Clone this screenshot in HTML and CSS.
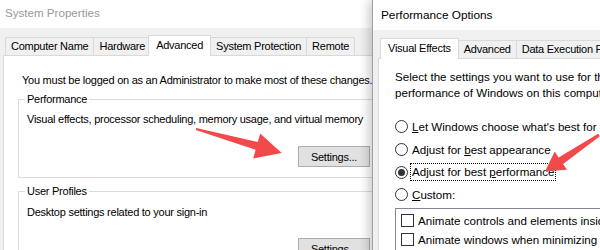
FILE: index.html
```html
<!DOCTYPE html>
<html lang="en">
<head>
    <meta charset="UTF-8">
    <meta name="viewport" content="width=device-width, initial-scale=1.0">
    <title>System Properties</title>
    <link rel="stylesheet" href="styles.css">
</head>
<body>
    <div class="desktop">
        <!-- System Properties (inactive, behind) -->
        <div class="window sysprops">
            <div class="titlebar inactive">System Properties</div>
            <div class="client">
                <div class="tabs">
                    <div class="tab">Computer Name</div>
                    <div class="tab">Hardware</div>
                    <div class="tab active">Advanced</div>
                    <div class="tab">System Protection</div>
                    <div class="tab">Remote</div>
                </div>
                <div class="tab-panel">
                    <p class="note">You must be logged on as an Administrator to make most of these changes.</p>
                    <fieldset class="group">
                        <legend>Performance</legend>
                        <p>Visual effects, processor scheduling, memory usage, and virtual memory</p>
                        <div class="actions"><button class="btn">Settings...</button></div>
                    </fieldset>
                    <fieldset class="group profiles">
                        <legend>User Profiles</legend>
                        <p>Desktop settings related to your sign-in</p>
                        <div class="actions"><button class="btn">Settings...</button></div>
                    </fieldset>
                </div>
            </div>
        </div>

        <!-- Performance Options (active, on top) -->
        <div class="window perfopts">
            <div class="titlebar">Performance Options</div>
            <div class="client">
                <div class="tabs">
                    <div class="tab active">Visual Effects</div>
                    <div class="tab">Advanced</div>
                    <div class="tab">Data Execution Prevention</div>
                </div>
                <div class="tab-panel">
                    <p class="intro">Select the settings you want to use for the appearance and performance of Windows on this computer.</p>
                    <div class="radios">
                        <div class="radio-row"><span class="radio"></span><span><u>L</u>et Windows choose what's best for my computer</span></div>
                        <div class="radio-row"><span class="radio"></span><span>Adjust for <u>b</u>est appearance</span></div>
                        <div class="radio-row"><span class="radio checked"></span><span class="focused">Adjust for best <u>p</u>erformance</span></div>
                        <div class="radio-row"><span class="radio"></span><span><u>C</u>ustom:</span></div>
                    </div>
                    <div class="effects-list">
                        <div class="check-row"><span class="checkbox"></span>Animate controls and elements inside windows</div>
                        <div class="check-row"><span class="checkbox"></span>Animate windows when minimizing and maximizing</div>
                        <div class="check-row"><span class="checkbox"></span>Animations in the taskbar</div>
                    </div>
                </div>
            </div>
        </div>

        <!-- red callout arrows drawn over both windows -->
        <svg class="callouts" width="600" height="250" viewBox="0 0 600 250">
            <polygon fill="#f24a4a" transform="translate(196,129) rotate(15.6)"
                     points="0,-1 63,-4 63,-13 89,0 63,13 63,4 0,1"/>
            <polygon fill="#f24a4a" transform="translate(599,135) rotate(146)"
                     points="0,-1.5 46,-4 46,-11 65,0 46,11 46,4 0,1.5"/>
        </svg>
    </div>
</body>
</html>
```
FILE: styles.css
```css
* {
    margin: 0;
    padding: 0;
    box-sizing: border-box;
}

body {
    background: #fff;
    font-family: "Liberation Sans", Arial, sans-serif;
    color: #000;
    overflow: hidden;
}

.desktop {
    position: relative;
    width: 600px;
    height: 250px;
    overflow: hidden;
}

/* ---------- shared window chrome ---------- */

.window {
    background: #f0f0f0;
}

.titlebar {
    background: #fff;
    white-space: nowrap;
}

.titlebar.inactive {
    color: #999;
}

.tabs {
    display: flex;
    align-items: flex-end;
    white-space: nowrap;
}

.tab {
    height: 18px;
    line-height: 17px;
    padding: 0 5px;
    margin-right: -1px;
    border: 1px solid #d9d9d9;
    border-bottom: none;
    background: #f0f0f0;
    font-size: 11px;
    letter-spacing: -0.25px;
}

/* selected tab grows 2px up and sideways and covers the panel border */
.tab.active {
    position: relative;
    z-index: 1;
    height: 21px;
    line-height: 18px;
    margin: 0 -1px -1px -2px;
    padding: 0 7px;
    background: #fff;
}

.tab-panel {
    background: #fff;
    border: 1px solid #d9d9d9;
}

/* ---------- System Properties ---------- */

.sysprops {
    width: 410px;
    height: 260px;
}

.sysprops .titlebar {
    height: 28px;
    line-height: 26px;
    padding-left: 5px;
    font-size: 11.6px;
}

.sysprops .tabs {
    height: 27px;
    padding: 9px 0 0 5px;
}

.sysprops .tab-panel {
    width: 397px;
    height: 230px;
    margin-left: 3px;
    padding: 16px 14px 0;
    font-size: 11px;
    letter-spacing: -0.25px;
    line-height: 16px;
}

.note {
    margin-left: 4px;
    white-space: nowrap;
}

.group {
    margin-top: 3px;
    border: 1px solid #dcdcdc;
    padding: 4px 14px 10px 8px;
}

.group legend {
    padding: 0 2px;
    margin-left: -2px;
    line-height: 16px;
}

.group p {
    white-space: nowrap;
}

.group .actions {
    display: flex;
    justify-content: flex-end;
    margin-top: 19px;
}

.group.profiles {
    margin-top: 5px;
    padding-top: 5px;
}

.group.profiles .actions {
    margin-top: 18px;
}

.btn {
    width: 72px;
    height: 21px;
    background: #e1e1e1;
    border: 1px solid #adadad;
    font-family: inherit;
    font-size: 11px;
    letter-spacing: -0.25px;
    color: #000;
}

/* ---------- Performance Options ---------- */

.perfopts {
    position: absolute;
    top: 0;
    left: 372px;
    width: 240px;
    height: 260px;
    border-left: 1px solid #a0a0a0;
    box-shadow: -3px 0 10px rgba(0, 0, 0, 0.22);
}

.perfopts .titlebar {
    height: 30px;
    line-height: 30px;
    padding-left: 8px;
    font-size: 11.8px;
}

.perfopts .tabs {
    height: 28px;
    padding: 10px 0 0 9px;
}

.perfopts .tab-panel {
    height: 220px;
    margin-left: 5px;
    padding: 10px 0 0 16px;
    font-size: 11.6px;
    line-height: 16px;
    white-space: nowrap;
}

.intro {
    width: 330px;
    white-space: normal;
}

.radios {
    margin-top: 14.5px;
}

.radio-row {
    display: flex;
    align-items: center;
    gap: 4px;
    height: 22.7px;
}

.radio {
    width: 13px;
    height: 13px;
    border: 1px solid #333;
    border-radius: 50%;
    background: #fff;
    display: flex;
    align-items: center;
    justify-content: center;
    flex-shrink: 0;
}

.radio.checked::after {
    content: "";
    width: 7px;
    height: 7px;
    border-radius: 50%;
    background: #333;
}

.focused {
    margin-left: -2px;
    padding: 0 1px;
    border: 1px dotted #000;
}

.effects-list {
    margin-top: 2px;
    height: 60px;
    border: 1px solid #828790;
    border-right: none;
    padding: 2px 0 0 5px;
}

.check-row {
    display: flex;
    align-items: center;
    gap: 4px;
    height: 19px;
}

.checkbox {
    width: 13px;
    height: 13px;
    border: 1px solid #333;
    background: #fff;
    flex-shrink: 0;
}

/* ---------- annotation overlay ---------- */

.callouts {
    position: absolute;
    top: 0;
    left: 0;
    z-index: 5;
    pointer-events: none;
}
```
